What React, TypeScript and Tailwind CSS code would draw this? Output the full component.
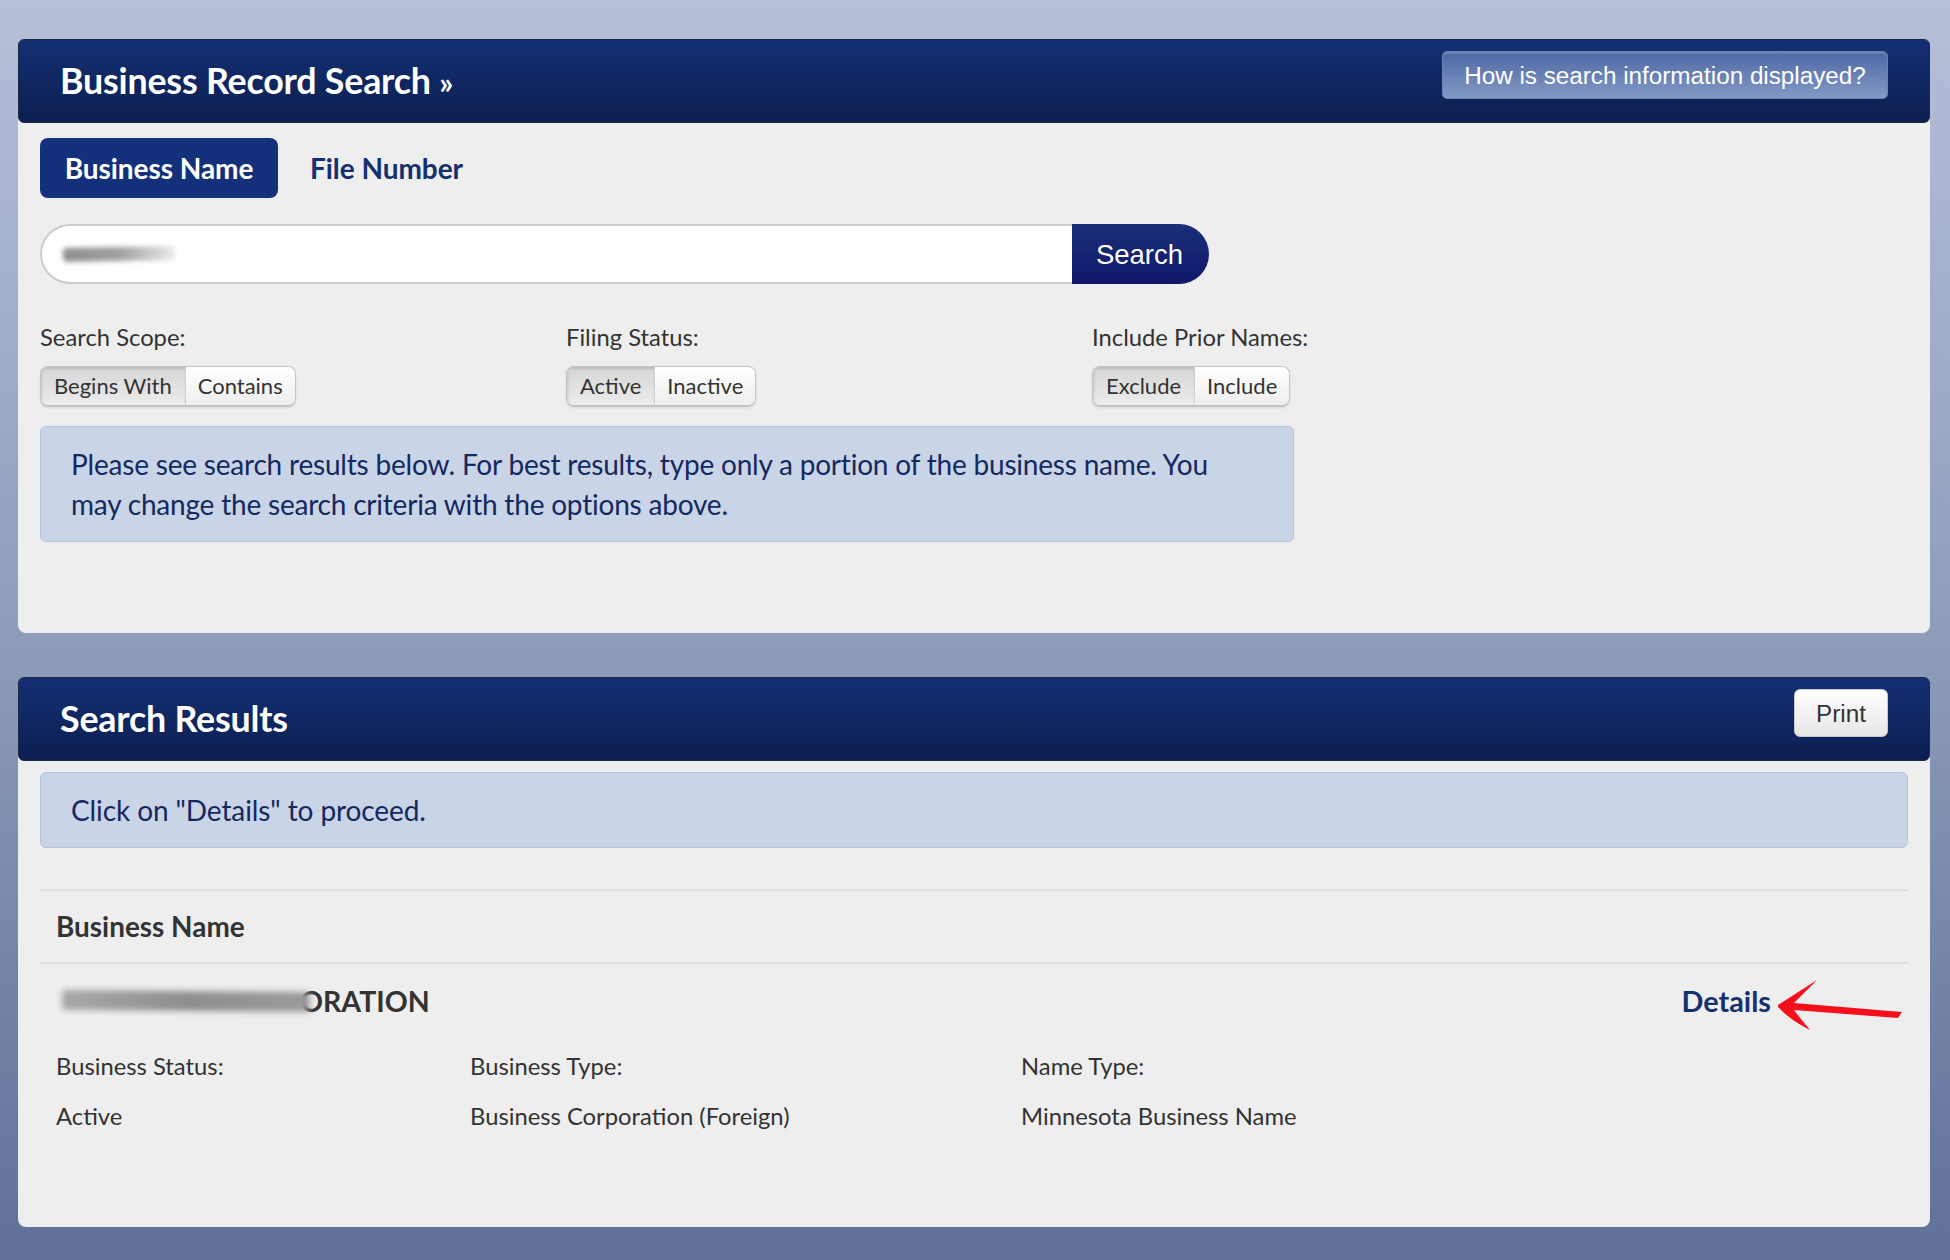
function PanelHeader({ title, children }: { title: React.ReactNode; children: React.ReactNode }) {
  return (
    <div className="flex h-[84px] items-start justify-between rounded-md border border-[#1c2a47] bg-gradient-to-b from-[#132f74] to-[#0c1f50] pr-[41px] pl-[41px]">
      <h1 className="mt-[19px] text-[35.8px] leading-[44px] font-bold tracking-[-0.2px] text-white">{title}</h1>
      {children}
    </div>
  );
}

function Segmented({ left, right }: { left: string; right: string }) {
  return (
    <div className="flex h-[41px] w-fit overflow-hidden rounded-lg border border-b-2 border-[#c4c4c4] text-[22px] leading-[38px] text-[#333333] shadow-[0_1px_3px_rgba(0,0,0,0.08)]">
      <div className="bg-gradient-to-b from-[#d6d6d6] to-[#ececec] px-[13px] shadow-[inset_1px_2px_3px_rgba(0,0,0,0.12)]">{left}</div>
      <div className="border-l border-[#d0d0d0] bg-gradient-to-b from-white to-[#eeeeee] px-[12px]">{right}</div>
    </div>
  );
}

function ScopeOption({ label, left, right }: { label: string; left: string; right: string }) {
  return (
    <div className="w-[526px]">
      <div className="mb-[15px] h-[27px] text-[23.8px] leading-[27px] text-[#333333]">{label}</div>
      <Segmented left={left} right={right} />
    </div>
  );
}

export default function App() {
  return (
    <div className="min-h-[1260px] bg-gradient-to-b from-[#b6bfd8] via-[#8f9dbb] to-[#5f7199] pt-[39px] pr-[20px] pb-[32px] pl-[18px] font-['Lato',sans-serif]">
      <div className="rounded-lg bg-[#eeeeee] pb-[91px]">
        <PanelHeader
          title={
            <>
              Business Record Search <span className="text-[31px]">»</span>
            </>
          }
        >
          <button className="mt-[11px] h-[48px] w-[446px] rounded-[5px] border border-[#6a84b8] bg-gradient-to-b from-[#4e68a3] to-[#8399c6] pt-[2px] font-['Liberation_Sans',sans-serif] text-[24.25px] text-white shadow-[inset_0_2px_0_rgba(255,255,255,0.14)]">
            How is search information displayed?
          </button>
        </PanelHeader>

        <div className="px-[22px]">
          <div className="mt-[15px] flex items-center">
            <div className="flex h-[60px] w-[238px] items-center justify-center rounded-lg bg-[#13307a] text-[28px] font-bold tracking-[-0.05px] text-white">
              Business Name
            </div>
            <div className="ml-[32px] text-[28px] font-bold tracking-[-0.05px] text-[#15306f]">File Number</div>
          </div>

          <div className="mt-[26px] flex h-[60px] w-[1169px]">
            <div className="relative flex-1 rounded-l-full border-2 border-r-0 border-[#cccccc] bg-white">
              <div className="absolute top-[21px] left-[21px] h-[14px] w-[112px] -rotate-1 rounded-sm bg-gradient-to-r from-[#8f8f8f] via-[#a0a0a0] to-[#ececec] blur-[2.5px]" />
            </div>
            <button className="w-[137px] rounded-r-[30px] bg-gradient-to-b from-[#1a2f78] to-[#10176b] pt-[2px] pr-[2px] font-['Liberation_Sans',sans-serif] text-[27.5px] text-white">
              Search
            </button>
          </div>

          <div className="mt-[40px] flex">
            <ScopeOption label="Search Scope:" left="Begins With" right="Contains" />
            <ScopeOption label="Filing Status:" left="Active" right="Inactive" />
            <ScopeOption label="Include Prior Names:" left="Exclude" right="Include" />
          </div>

          <div className="mt-[19px] w-[1254px] rounded-md border border-[#b4c6e0] bg-[#cad4e7] pt-[17px] pr-[30px] pb-[17px] pl-[30px] text-[28px] leading-[40px] tracking-[-0.2px] text-[#14295f]">
            Please see search results below. For best results, type only a portion of the business name. You may change the search criteria with the options above.
          </div>
        </div>
      </div>

      <div className="mt-[44px] rounded-lg bg-[#eeeeee] pb-[97px]">
        <PanelHeader title="Search Results">
          <button className="mt-[11px] h-[48px] w-[94px] rounded-md border border-[#c9c9c9] bg-gradient-to-b from-white to-[#e6e6e6] pt-[2px] font-['Liberation_Sans',sans-serif] text-[24.25px] text-[#333333]">
            Print
          </button>
        </PanelHeader>

        <div className="px-[22px]">
          <div className="mt-[11px] flex h-[76px] items-center rounded-md border border-[#b4c6e0] bg-[#cad4e7] pl-[30px] text-[28px] tracking-[-0.1px] text-[#14295f]">
            Click on "Details" to proceed.
          </div>

          <div className="mt-[41px] flex h-[75px] items-center border-y-2 border-[#e0e0e0] pl-[16px] text-[27.9px] font-bold text-[#333333]">
            Business Name
          </div>

          <div className="relative mt-[17px] flex items-center justify-between pl-[22px]">
            <div className="flex items-center text-[28.5px] leading-[40px] font-bold text-[#333333]">
              <div className="relative z-10 mr-[-10px] h-[20px] w-[248px] rotate-[0.5deg] bg-gradient-to-r from-[#a8a8a8] via-[#8e8e8e] to-[#9a9a9a] blur-[3px]" />
              <span>ORATION</span>
            </div>
            <a className="mr-[137px] text-[28.8px] leading-[40px] font-bold text-[#15306f]">Details</a>
            <svg className="absolute top-[-8px] right-[-2px] h-[65px] w-[140px]" viewBox="0 0 140 65">
              <path d="M8 32 L47 7 Q34 20 24 30 L132 39 L128 45 L24 37 Q30 45 40 57 Q20 47 8 34 Z" fill="#f5101c" />
            </svg>
          </div>

          <div className="mt-[31px] flex pl-[16px] text-[23.8px] leading-[28px] text-[#333333]">
            <div className="w-[414px]">
              <div>Business Status:</div>
              <div className="mt-[22px]">Active</div>
            </div>
            <div className="w-[551px]">
              <div>Business Type:</div>
              <div className="mt-[22px]">Business Corporation (Foreign)</div>
            </div>
            <div>
              <div>Name Type:</div>
              <div className="mt-[22px]">Minnesota Business Name</div>
            </div>
          </div>
        </div>
      </div>
    </div>
  );
}
